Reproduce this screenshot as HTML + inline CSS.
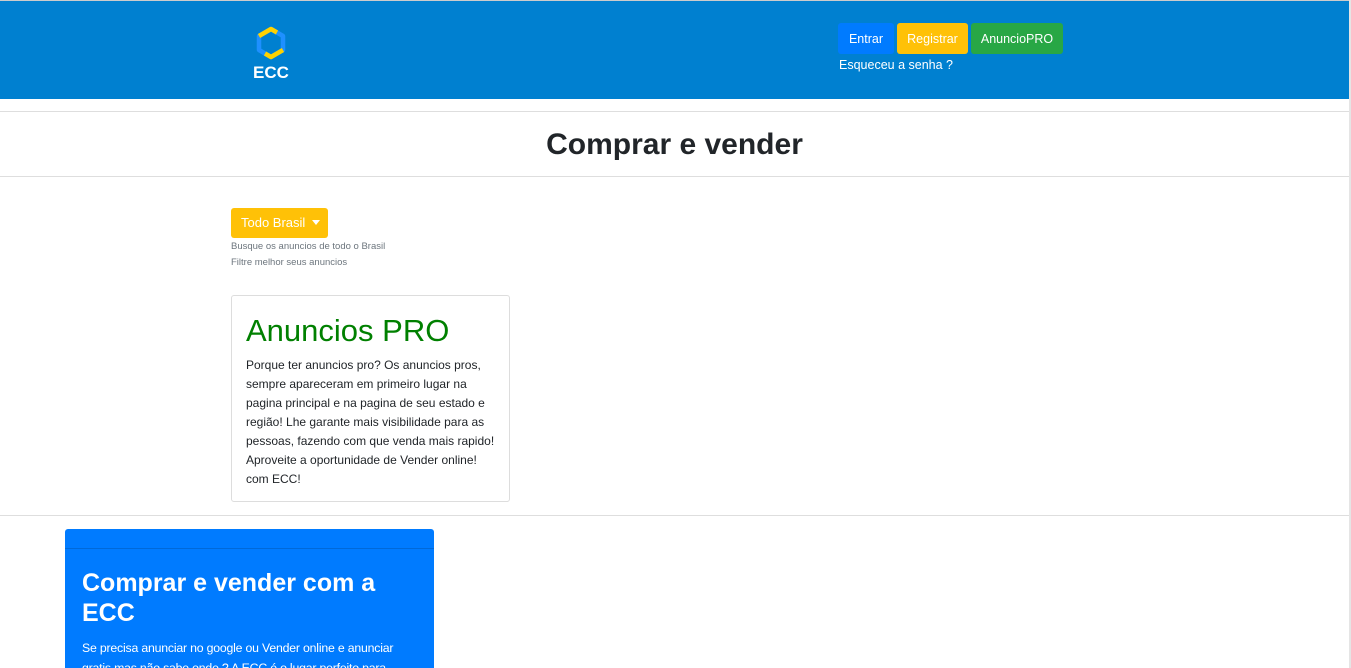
<!DOCTYPE html>
<html><head><meta charset="utf-8"><style>
*{box-sizing:border-box;margin:0;padding:0}
html{width:1351px;height:668px;overflow:hidden}
body{width:1351px;height:668px;overflow:hidden;background:#fff;font-family:"Liberation Sans",sans-serif;color:#212529;position:relative}
.top{position:absolute;left:0;top:0;width:1351px;height:1px;background:#ccc}
.hdr{position:absolute;left:0;top:1px;width:1349px;height:98px;background:#0080d0}
.rb{position:absolute;right:0;top:0;width:2px;height:668px;background:#e5e5e5}
.btn{position:absolute;top:22px;height:31px;color:#fff;font-size:12.5px;line-height:33px;text-align:center;border-radius:3px}
.hl{position:absolute;left:0;width:1349px;height:1px;background:#dedede}
</style></head><body>
<div class="top"></div>
<div class="hdr">
<svg style="position:absolute;left:254px;top:25px" width="34" height="34" viewBox="0 0 34 34">
<polygon points="17,3 29,10 29,24 17,31 5,24 5,10" fill="none" stroke="#1e90ff" stroke-width="4.5" stroke-linejoin="round"/>
<path d="M5,10 L17,3 L23,6.5 M29,24 L17,31 L11,27.5" fill="none" stroke="#ffd200" stroke-width="4.5" stroke-linejoin="round"/>
</svg>
<div style="position:absolute;left:253px;top:62px;color:#fff;font-weight:bold;font-size:17px">ECC</div>
<div class="btn" style="left:838px;width:56px;background:#007bff">Entrar</div>
<div class="btn" style="left:897px;width:71px;background:#ffc107">Registrar</div>
<div class="btn" style="left:971px;width:92px;background:#28a745">AnuncioPRO</div>
<div style="position:absolute;left:839px;top:57px;color:#fff;font-size:12.5px">Esqueceu a senha ?</div>
</div>
<div class="rb"></div>
<div class="hl" style="top:111px"></div>
<div style="position:absolute;left:0;width:1349px;top:128px;text-align:center;font-size:30px;font-weight:bold;color:#212529">Comprar e vender</div>
<div class="hl" style="top:176px"></div>
<div style="position:absolute;left:231px;top:208px;width:97px;height:30px;background:#ffc107;color:#fff;border-radius:3px;font-size:13px;line-height:30px;padding-left:10px">Todo Brasil <span style="display:inline-block;border:4px solid transparent;border-top:5px solid #fff;vertical-align:-2px;margin-left:3px"></span></div>
<div style="position:absolute;left:231px;top:239px;font-size:9.5px;color:#6c757d;line-height:15.5px">Busque os anuncios de todo o Brasil<br>Filtre melhor seus anuncios</div>
<div style="position:absolute;left:231px;top:295px;width:279px;height:207px;border:1px solid #ddd;border-radius:3px;padding:16px 14px">
<div style="color:#008000;font-size:31px;line-height:38px">Anuncios PRO</div>
<div style="font-size:12px;line-height:19px;margin-top:6px">Porque ter anuncios pro? Os anuncios pros, sempre apareceram em primeiro lugar na pagina principal e na pagina de seu estado e região! Lhe garante mais visibilidade para as pessoas, fazendo com que venda mais rapido! Aproveite a oportunidade de Vender online! com ECC!</div>
</div>
<div class="hl" style="top:515px"></div>
<div style="position:absolute;left:65px;top:529px;width:369px;height:160px;background:#007bff;border-radius:3px;color:#fff">
<div style="height:20px;border-bottom:1px solid #0069d9"></div>
<div style="padding:19px 17px">
<div style="font-size:25px;line-height:30px;font-weight:bold">Comprar e vender com a ECC</div>
<div style="font-size:12.3px;line-height:20px;margin-top:10px;letter-spacing:-0.2px">Se precisa anunciar no google ou Vender online e anunciar gratis mas não sabe onde ? A ECC é o lugar perfeito para</div>
</div></div>
</body></html>
